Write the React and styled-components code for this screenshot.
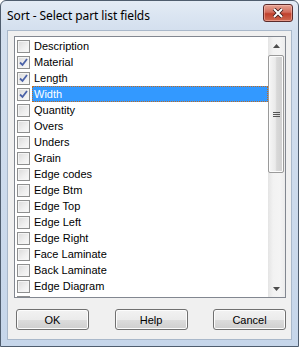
import styled, { createGlobalStyle } from "styled-components";

const Global = createGlobalStyle`
  html, body { margin: 0; padding: 0; background: #ffffff; }
  body { width: 299px; height: 347px; overflow: hidden; }
`;

// last row is scrolled out of view; only its checkbox top edge shows
const fields = [
  { name: "Description", checked: false },
  { name: "Material", checked: true },
  { name: "Length", checked: true },
  { name: "Width", checked: true, selected: true },
  { name: "Quantity" },
  { name: "Overs" },
  { name: "Unders" },
  { name: "Grain" },
  { name: "Edge codes" },
  { name: "Edge Btm" },
  { name: "Edge Top" },
  { name: "Edge Left" },
  { name: "Edge Right" },
  { name: "Face Laminate" },
  { name: "Back Laminate" },
  { name: "Edge Diagram" },
  { name: "" },
];

const Window = styled.div`
  width: 299px;
  height: 347px;
  box-sizing: border-box;
  border: 1px solid #4f5d6e;
  border-radius: 6px 6px 0 0;
  background: linear-gradient(#e3ebf5 0px, #d3dfee 30px, #c6d6ea 100%);
  display: flex;
  flex-direction: column;
  padding: 0 6px 6px 6px;
  font-family: "Liberation Sans", Arial, sans-serif;
`;

const TitleBar = styled.div`
  height: 29px;
  display: flex;
  align-items: center;
  justify-content: space-between;
`;

const Title = styled.span`
  font-family: "Noto Sans", "Open Sans", sans-serif;
  font-size: 12px;
  color: #000;
  letter-spacing: -0.1px;
`;

const CloseButton = styled.div`
  width: 30px;
  height: 18px;
  box-sizing: border-box;
  margin-top: -6px;
  margin-right: -1px;
  border: 1px solid #5b2b2b;
  border-radius: 3px;
  background: linear-gradient(#e6a393 0%, #d26c5c 45%, #c0402c 55%, #d06a52 100%);
  display: flex;
  align-items: center;
  justify-content: center;
  box-shadow: inset 0 0 0 1px rgba(255, 200, 190, 0.5);
`;

const Client = styled.div`
  flex: 1;
  background: #f0f0f0;
  border: 1px solid #a9b8ca;
  display: flex;
  flex-direction: column;
  padding: 5px 5px 0 6px;
`;

const ListBox = styled.div`
  width: 272px;
  height: 262px;
  box-sizing: border-box;
  border: 1px solid #828790;
  background: #fff;
  display: flex;
  overflow: hidden;
`;

const Items = styled.div`
  flex: 1;
  padding: 1px 0 0 2px;
  overflow: hidden;
`;

const Row = styled.div`
  height: 16px;
  display: flex;
  align-items: center;
  gap: 2px;
`;

const Box = styled.div`
  width: 13px;
  height: 13px;
  box-sizing: border-box;
  border: 1px solid #8e8f8f;
  background: linear-gradient(135deg, #d9d9d9 0%, #eeeeee 55%, #fafafa 100%);
  box-shadow: inset 0 0 0 1px #f4f4f4;
  display: flex;
  align-items: center;
  justify-content: center;
  flex: none;
`;

const Label = styled.div`
  flex: 1;
  height: 16px;
  box-sizing: border-box;
  line-height: 14px;
  padding-left: 1px;
  font-size: 11px;
  color: ${(p) => (p.$selected ? "#fff" : "#000")};
  background: ${(p) => (p.$selected ? "#3399ff" : "transparent")};
  border: 1px dotted ${(p) => (p.$selected ? "#c06a20" : "transparent")};
`;

const ScrollBar = styled.div`
  width: 17px;
  display: flex;
  flex-direction: column;
  background: linear-gradient(90deg, #e4e4e4, #f2f2f2 30%, #f4f4f4 70%, #ececec);
  flex: none;
`;

const Arrow = styled.div`
  height: 17px;
  display: flex;
  align-items: center;
  justify-content: center;
  flex: none;
`;

const Track = styled.div`
  flex: 1;
  display: flex;
  flex-direction: column;
`;

const Thumb = styled.div`
  margin-top: 1px;
  height: 118px;
  width: 16px;
  box-sizing: border-box;
  border: 1px solid #9a9a9a;
  border-radius: 2px;
  background: linear-gradient(90deg, #f6f6f6, #eaeaea 45%, #d8d8d8 55%, #cfcfcf);
  box-shadow: inset 0 0 0 1px #fbfbfb;
  display: flex;
  align-items: center;
  justify-content: center;
`;

const Buttons = styled.div`
  margin-top: 11px;
  width: 270px;
  padding-left: 2px;
  display: flex;
  justify-content: space-between;
`;

const Button = styled.div`
  width: 73px;
  height: 21px;
  box-sizing: border-box;
  border: 1px solid #707070;
  border-radius: 3px;
  background: linear-gradient(#f2f2f2 0%, #ebebeb 50%, #dddddd 51%, #cfcfcf 100%);
  box-shadow: inset 0 0 0 1px #fcfcfc;
  display: flex;
  align-items: center;
  justify-content: center;
  font-size: 11px;
  color: #000;
`;

const Check = () => (
  <svg width="9" height="9" viewBox="0 0 9 9">
    <path d="M1 4.5 L3.5 7 L8 1" fill="none" stroke="#4b62a8" strokeWidth="1.8" />
  </svg>
);

const Grip = () => (
  <svg width="7" height="7" viewBox="0 0 7 7">
    <path d="M0 1.5H7M0 3.5H7M0 5.5H7" stroke="#555" strokeWidth="1" />
  </svg>
);

const Tri = ({ up }) => (
  <svg width="7" height="4" viewBox="0 0 7 4">
    <path d={up ? "M0 4 L3.5 0 L7 4Z" : "M0 0 L3.5 4 L7 0Z"} fill="#4d4d4d" />
  </svg>
);

export default function App() {
  return (
    <>
      <Global />
      <Window>
        <TitleBar>
          <Title>Sort - Select part list fields</Title>
          <CloseButton>
            <svg width="12" height="10" viewBox="0 0 12 10">
              <path d="M2 1 L10 9 M10 1 L2 9" stroke="#3a1a1a" strokeWidth="3.6" />
              <path d="M2 1 L10 9 M10 1 L2 9" stroke="#fff" strokeWidth="2" />
            </svg>
          </CloseButton>
        </TitleBar>
        <Client>
          <ListBox>
            <Items>
              {fields.map((f, i) => (
                <Row key={i}>
                  <Box>{f.checked && <Check />}</Box>
                  <Label $selected={f.selected}>{f.name}</Label>
                </Row>
              ))}
            </Items>
            <ScrollBar>
              <Arrow><Tri up /></Arrow>
              <Track>
                <Thumb><Grip /></Thumb>
              </Track>
              <Arrow><Tri /></Arrow>
            </ScrollBar>
          </ListBox>
          <Buttons>
            <Button>OK</Button>
            <Button>Help</Button>
            <Button>Cancel</Button>
          </Buttons>
        </Client>
      </Window>
    </>
  );
}
